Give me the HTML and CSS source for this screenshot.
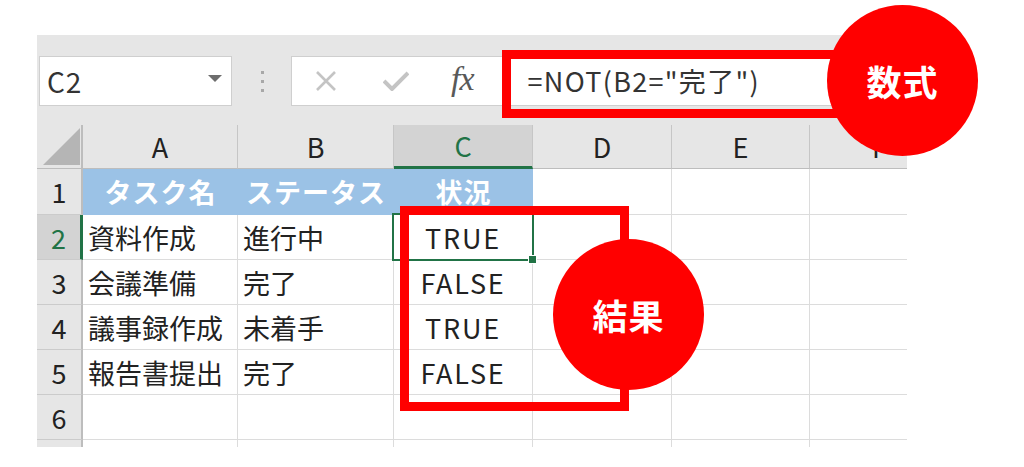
FILE: index.html
```html
<!DOCTYPE html>
<html>
<head>
  <title>NOT関数</title>
  <link rel="stylesheet" href="styles.css">
</head>
<body>
  <div class="page">
    <div class="sheet">
      <div class="toolbar">
        <div class="namebox">
          <span class="cellref">C2</span>
          <span class="caret"></span>
        </div>
        <div class="grip"><i></i><i></i><i></i></div>
        <div class="formula">
          <svg class="ico" width="22" height="20" viewBox="0 0 22 20">
            <path d="M2 1 L20 19 M20 1 L2 19" stroke="#c4c4c4" stroke-width="2.6" fill="none"/>
          </svg>
          <svg class="ico check" width="26" height="20" viewBox="0 0 26 20">
            <path d="M1 10 L9 18 L25 2" stroke="#c4c4c4" stroke-width="4" fill="none"/>
          </svg>
          <span class="fx">fx</span>
          <span class="expr">=NOT(B2="完了")</span>
        </div>
      </div>

      <div class="grid">
        <div class="hd corner"></div>
        <div class="hd">A</div>
        <div class="hd">B</div>
        <div class="hd sel">C</div>
        <div class="hd">D</div>
        <div class="hd">E</div>
        <div class="hd">F</div>

        <div class="rh">1</div>
        <div class="c title">タスク名</div>
        <div class="c title">ステータス</div>
        <div class="c title">状況</div>
        <div class="c"></div>
        <div class="c"></div>
        <div class="c"></div>

        <div class="rh sel">2</div>
        <div class="c">資料作成</div>
        <div class="c">進行中</div>
        <div class="c mid active">TRUE</div>
        <div class="c"></div>
        <div class="c"></div>
        <div class="c"></div>

        <div class="rh">3</div>
        <div class="c">会議準備</div>
        <div class="c">完了</div>
        <div class="c mid">FALSE</div>
        <div class="c"></div>
        <div class="c"></div>
        <div class="c"></div>

        <div class="rh">4</div>
        <div class="c">議事録作成</div>
        <div class="c">未着手</div>
        <div class="c mid">TRUE</div>
        <div class="c"></div>
        <div class="c"></div>
        <div class="c"></div>

        <div class="rh">5</div>
        <div class="c">報告書提出</div>
        <div class="c">完了</div>
        <div class="c mid">FALSE</div>
        <div class="c"></div>
        <div class="c"></div>
        <div class="c"></div>

        <div class="rh">6</div>
        <div class="c"></div>
        <div class="c"></div>
        <div class="c"></div>
        <div class="c"></div>
        <div class="c"></div>
        <div class="c"></div>

        <div class="rh cut"></div>
        <div class="c cut"></div>
        <div class="c cut"></div>
        <div class="c cut"></div>
        <div class="c cut"></div>
        <div class="c cut"></div>
        <div class="c cut"></div>
      </div>
    </div>

    <div class="frame frame-formula"></div>
    <div class="frame frame-result"></div>
    <div class="badge badge-formula">数式</div>
    <div class="badge badge-result">結果</div>
  </div>
</body>
</html>
```

FILE: styles.css
```css
body {
  margin: 0;
  background-color: #fff;
  font-family: "Noto Sans CJK JP", "Noto Sans", sans-serif;
  color: #222;
}
.page {
  position: relative;
  width: 1024px;
  height: 467px;
  overflow: hidden;
}
.sheet {
  margin: 35px 0 0 37px;
  width: 870px;
  background-color: #e6e6e6;
  overflow: hidden;
}

/* formula bar */
.toolbar {
  display: flex;
  align-items: center;
  height: 90px;
  padding-left: 2px;
  box-sizing: border-box;
  padding-top: 2px;
}
.namebox {
  width: 193px;
  height: 50px;
  background-color: #fff;
  border: 1px solid #cfcfcf;
  box-sizing: border-box;
  display: flex;
  align-items: center;
  justify-content: space-between;
  padding: 0 9px 0 7px;
}
.cellref {
  font-size: 28px;
  color: #333;
  letter-spacing: 1px;
}
.caret {
  width: 0;
  height: 0;
  border-left: 7px solid transparent;
  border-right: 7px solid transparent;
  border-top: 7px solid #6d6d6d;
  margin-top: -6px;
}
.grip {
  display: flex;
  flex-direction: column;
  gap: 6px;
  margin: 0 27px 0 29px;
}
.grip i {
  display: block;
  width: 3px;
  height: 3px;
  background-color: #a8a8a8;
}
.formula {
  flex: 1;
  height: 50px;
  background-color: #fff;
  border: 1px solid #cfcfcf;
  border-right: none;
  box-sizing: border-box;
  display: flex;
  align-items: center;
  padding-left: 23px;
}
.ico {
  display: block;
}
.check {
  margin-left: 46px;
}
.fx {
  margin-left: 42px;
  font-family: "Liberation Serif", "DejaVu Serif", serif;
  font-style: italic;
  font-size: 34px;
  color: #595959;
  letter-spacing: -1px;
  margin-top: -4px;
}
.expr {
  margin-left: 54px;
  font-size: 27px;
  color: #333;
  margin-top: -2px;
  letter-spacing: 1.3px;
}

/* cells */
.grid {
  display: grid;
  grid-template-columns: 46px 155px 156px 139px 139px 138px 140px;
  grid-template-rows: 44px 46px 45px 45px 45px 45px 45px 7px;
  background-color: #fff;
}
.grid > div {
  box-sizing: border-box;
  border-right: 1px solid #dcdcdc;
  border-bottom: 1px solid #dcdcdc;
  font-size: 27px;
  line-height: 1;
  display: flex;
  align-items: center;
  white-space: nowrap;
}
.hd {
  background-color: #e6e6e6;
  justify-content: center;
  border-right-color: #c6c6c6 !important;
  border-bottom: 1px solid #bdbdbd !important;
  color: #222;
}
.hd.sel {
  background-color: #d3d3d3;
  color: #217346;
  border-bottom: 3px solid #217346 !important;
}
.corner {
  position: relative;
  border-right: 2px solid #bdbdbd !important;
}
.corner::after {
  content: "";
  position: absolute;
  left: 6px;
  top: 3px;
  width: 37px;
  height: 37px;
  background-color: #b5b5b5;
  clip-path: polygon(100% 0, 100% 100%, 0 100%);
}
.rh {
  background-color: #e6e6e6;
  justify-content: center;
  border-right: 2px solid #bdbdbd !important;
  border-bottom-color: #cbcbcb !important;
}
.rh.sel {
  background-color: #d3d3d3;
  color: #217346;
  border-right: 3px solid #217346 !important;
}
.c {
  padding-left: 5px;
}
.title {
  background-color: #9bc2e6;
  color: #fff;
  font-weight: bold;
  justify-content: center;
  padding-left: 0;
  border-right: none !important;
  border-bottom-color: #9bc2e6 !important;
  font-size: 26px;
  letter-spacing: 1px;
}
.mid {
  justify-content: center;
  padding-left: 0;
  letter-spacing: 1.8px;
}
.active {
  position: relative;
}
.active::before {
  content: "";
  position: absolute;
  left: -2px;
  top: -2px;
  right: -2px;
  bottom: -2px;
  border: 2px solid #217346;
}
.active::after {
  content: "";
  position: absolute;
  right: -5px;
  bottom: -5px;
  width: 7px;
  height: 7px;
  background-color: #217346;
  border: 1px solid #fff;
}
.cut {
  border-bottom: none !important;
}

/* annotations */
.frame {
  position: absolute;
  border: 9px solid #ff0000;
  box-sizing: border-box;
}
.frame-formula {
  left: 502px;
  top: 50px;
  width: 360px;
  height: 68px;
}
.frame-result {
  left: 400px;
  top: 206px;
  width: 229px;
  height: 205px;
}
.badge {
  position: absolute;
  width: 151px;
  height: 151px;
  border-radius: 50%;
  background-color: #ff0000;
  color: #fff;
  font-size: 35px;
  font-weight: bold;
  display: flex;
  align-items: center;
  justify-content: center;
  letter-spacing: 1px;
}
.badge-formula {
  left: 827px;
  top: 5px;
}
.badge-result {
  left: 553px;
  top: 239px;
}
```
